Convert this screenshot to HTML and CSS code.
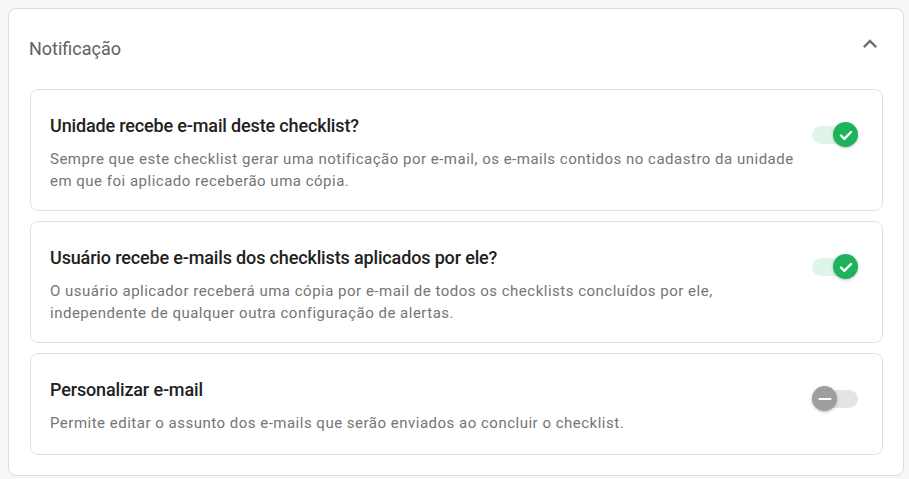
FILE: index.html
```html
<!DOCTYPE html>
<html lang="pt-BR">
<head>
<meta charset="utf-8">
<title>Notificação</title>
<link rel="stylesheet" href="styles.css">
</head>
<body>
<section class="panel">
  <header class="panel-header">
    <h2 class="panel-title">Notificação</h2>
    <svg class="chevron" viewBox="0 0 24 24" width="28" height="28" aria-hidden="true"><path d="M12 8l-6 6 1.41 1.41L12 10.83l4.59 4.58L18 14z" fill="currentColor"/></svg>
  </header>
  <div class="options">
    <div class="option">
      <div class="option-text">
        <h3 class="option-title">Unidade recebe e-mail deste checklist?</h3>
        <p class="option-desc">Sempre que este checklist gerar uma notificação por e-mail, os e-mails contidos no cadastro da unidade em que foi aplicado receberão uma cópia.</p>
      </div>
      <div class="switch on">
        <span class="track"></span>
        <span class="thumb"><svg viewBox="0 0 24 24" width="24" height="24"><path d="M7 12.5l3.3 3.3L17 9" fill="none" stroke="#fff" stroke-width="2.4" stroke-linecap="round" stroke-linejoin="round"/></svg></span>
      </div>
    </div>
    <div class="option">
      <div class="option-text">
        <h3 class="option-title">Usuário recebe e-mails dos checklists aplicados por ele?</h3>
        <p class="option-desc">O usuário aplicador receberá uma cópia por e-mail de todos os checklists concluídos por ele, independente de qualquer outra configuração de alertas.</p>
      </div>
      <div class="switch on">
        <span class="track"></span>
        <span class="thumb"><svg viewBox="0 0 24 24" width="24" height="24"><path d="M7 12.5l3.3 3.3L17 9" fill="none" stroke="#fff" stroke-width="2.4" stroke-linecap="round" stroke-linejoin="round"/></svg></span>
      </div>
    </div>
    <div class="option">
      <div class="option-text">
        <h3 class="option-title">Personalizar e-mail</h3>
        <p class="option-desc">Permite editar o assunto dos e-mails que serão enviados ao concluir o checklist.</p>
      </div>
      <div class="switch off">
        <span class="track"></span>
        <span class="thumb"><svg viewBox="0 0 24 24" width="24" height="24"><path d="M6.5 12h11" fill="none" stroke="#fff" stroke-width="2.2" stroke-linecap="round"/></svg></span>
      </div>
    </div>
  </div>
</section>
</body>
</html>
```

FILE: styles.css
```css
html, body {
  margin: 0;
  padding: 0;
  background: #f7f7f7;
  font-family: Roboto, "Liberation Sans", Arial, sans-serif;
}

.panel {
  box-sizing: border-box;
  width: 896px;
  margin: 8px 0 0 8px;
  background: #fff;
  border: 1px solid #dcdcdc;
  border-radius: 8px;
  padding: 0 20px 20px 21px;
}

.panel-header {
  height: 80px;
  display: flex;
  align-items: center;
  justify-content: space-between;
}

.panel-title {
  margin: 0 0 0 -1px;
  font-size: 18px;
  font-weight: 400;
  line-height: 24px;
  color: #616161;
}

.chevron {
  color: #707070;
  margin-bottom: 10px;
  margin-right: -1px;
}

.options {
  display: flex;
  flex-direction: column;
  gap: 10px;
}

.option {
  border: 1px solid #e0e0e0;
  border-radius: 8px;
  padding: 24px 24px 18px 19px;
  display: flex;
  align-items: flex-start;
  gap: 6px;
}

.option:last-child {
  padding-bottom: 20px;
}

.option-text {
  flex: 1;
  min-width: 0;
}

.option-title {
  margin: 0;
  font-size: 18px;
  font-weight: 500;
  line-height: 24px;
  letter-spacing: -0.15px;
  color: #212121;
}

.option-desc {
  margin: 10px 0 0;
  font-size: 15px;
  line-height: 22px;
  color: #757575;
  letter-spacing: 0.5px;
}

.switch {
  position: relative;
  width: 46px;
  height: 26px;
  margin-top: 8px;
  flex: none;
}

.switch .track {
  position: absolute;
  left: 0;
  right: 0;
  top: 4px;
  height: 18px;
  border-radius: 9px;
}

.switch .thumb {
  position: absolute;
  top: 0;
  width: 25px;
  height: 25px;
  border-radius: 50%;
  display: flex;
  align-items: center;
  justify-content: center;
  box-shadow: 0 1px 3px rgba(0, 0, 0, 0.25);
}

.switch.on .track { background: #e0f5e9; }
.switch.on .thumb { right: 0; background: #1db35b; }

.switch.off .track { background: #e4e4e4; }
.switch.off .thumb { left: 0; background: #9e9e9e; }
```
